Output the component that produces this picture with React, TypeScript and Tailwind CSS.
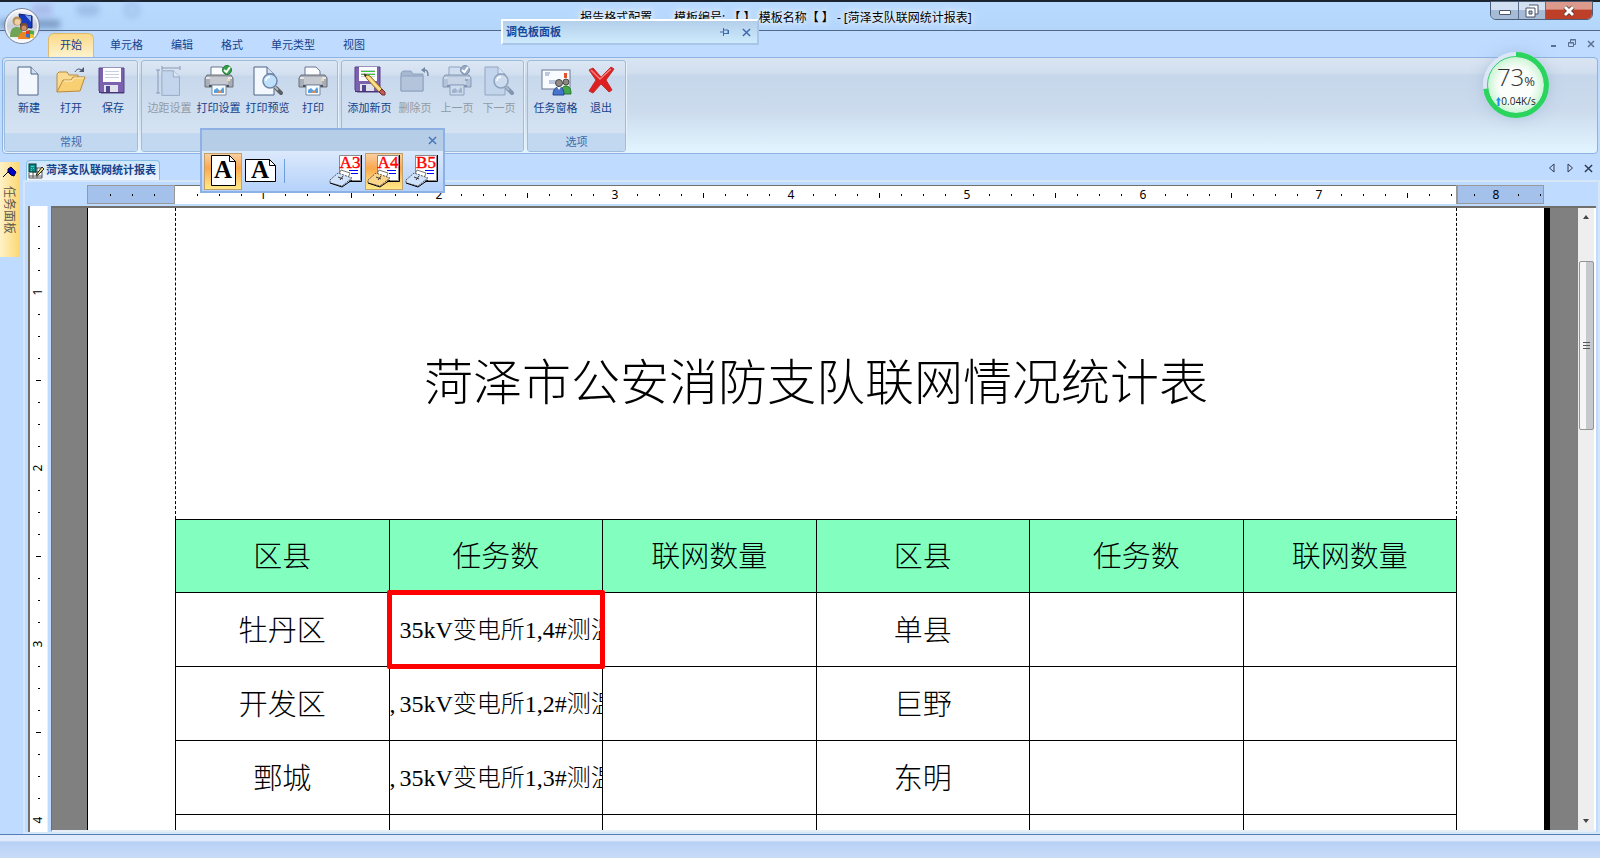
import React from 'react'
import { clsx } from 'clsx'

type IconProps = { muted?: boolean }

const PageShape = ({ x = 5, muted }: { x?: number; muted?: boolean }) => (
  <g transform={`translate(${x} 1)`}>
    <path d="M1 1H14L21 8V29H1Z" fill={muted ? '#c3d5ec' : '#f3f8ff'} stroke={muted ? '#93a5bf' : '#4f6486'} />
    <path d="M14 1V8H21" fill={muted ? '#d9e5f4' : '#cfdef2'} stroke={muted ? '#93a5bf' : '#4f6486'} />
  </g>
)

const NewIcon = () => (
  <svg viewBox="0 0 32 32" className="size-8">
    <g transform="translate(-1 0)">
      <PageShape />
    </g>
  </svg>
)

const OpenIcon = () => (
  <svg viewBox="0 0 32 32" className="size-8">
    <path d="M2 27V9l2-2h8l2 3h9v4" fill="#f9dc92" stroke="#b98a3c" />
    <path d="M2 27L8 15h8l2-3h12L25 26Z" fill="#f8cf72" stroke="#b98a3c" />
    <path d="M9 16h8l2-3h10" stroke="#fff0c0" fill="none" />
    <path d="M20 7c2-4 6-4 8 0" fill="none" stroke="#4a5970" />
    <path d="M24 7h5V2Z" fill="#4a5970" />
  </svg>
)

const FloppyShape = () => (
  <>
    <path d="M2 3H27V28H4L2 26Z" fill="#7c61ae" stroke="#56418a" />
    <rect x="6" y="3" width="18" height="14" fill="#fdfdff" />
    <path d="M8 6.500h14M8 9.500h14M8 12.500h14" stroke="#c9cede" />
    <rect x="7" y="20" width="14" height="8" fill="#dfe1ec" />
    <rect x="9" y="21" width="4" height="7" fill="#54468a" />
    <path d="M2 27.500H27" stroke="#463475" />
  </>
)

const SaveIcon = () => (
  <svg viewBox="0 0 32 32" className="size-8">
    <FloppyShape />
  </svg>
)

const MarginIcon = () => (
  <svg viewBox="0 0 32 32" className="size-8">
    <g transform="translate(7 4) scale(.88)">
      <PageShape x={0} muted />
    </g>
    <path d="M8 3H26M8 1V5M26 1V5M4 5V28M2 5H6M2 28H6" stroke="#8699b5" fill="none" />
  </svg>
)

const PrinterShape = ({ muted }: IconProps) => (
  <>
    <path d="M8 11V2H19L23 6V11Z" fill={muted ? '#d0deef' : '#fafcff'} stroke={muted ? '#8ea2bf' : '#68778f'} />
    <path d="M4 10H28L30 13V22H2V13Z" fill={muted ? '#b3c3d9' : '#a9adb5'} stroke={muted ? '#8597b3' : '#6b7079'} />
    <path d="M3 13H29" stroke={muted ? '#d0dcea' : '#e4e6e9'} strokeWidth="2" />
    <rect x="7" y="12" width="18" height="7" fill={muted ? '#c7d4e5' : '#c6c9cf'} />
    <path d="M6 21H26" stroke={muted ? '#8093b0' : '#4c5058'} strokeWidth="2" />
    <rect x="24" y="14" width="3" height="2" fill={muted ? '#95a8c3' : '#f6d9a0'} />
    <path d="M9 20H23V30H9Z" fill={muted ? '#cddbec' : '#f9fcff'} stroke={muted ? '#8ca0bd' : '#7989a1'} />
    <path d="M11 28V25L14 23L17 26L20 22L21 24V28Z" fill={muted ? '#9fb3cf' : '#579fdd'} />
    <path d="M14 28L17 25L19 28Z" fill={muted ? '#b7c7dc' : '#e58a4d'} />
  </>
)

const PrintIcon = () => (
  <svg viewBox="0 0 32 32" className="size-8">
    <PrinterShape />
  </svg>
)

const PrintCheckIcon = ({ muted }: IconProps) => (
  <svg viewBox="0 0 32 32" className="size-8">
    <PrinterShape muted={muted} />
    <circle cx="24" cy="5" r="4.5" fill={muted ? '#98acc7' : '#36a148'} stroke={muted ? '#7d91b0' : '#23783a'} />
    <path d="M21 5L23.500 7L27 2" stroke="#fff" strokeWidth="2" fill="none" />
  </svg>
)

const PreviewIcon = ({ muted }: IconProps) => (
  <svg viewBox="0 0 32 32" className="size-8">
    <PageShape x={1} muted={muted} />
    <path d="M24 23L29 28" stroke={muted ? '#8395b0' : '#5d5f66'} strokeWidth="4" strokeLinecap="round" />
    <path d="M22 21L26 25" stroke={muted ? '#a9b9cf' : '#b7b9be'} strokeWidth="2" />
    <circle cx="18" cy="16" r="7" fill={muted ? '#ccdcee' : '#bfe0fa'} stroke={muted ? '#8ea1bd' : '#7186a8'} strokeWidth="1.500" />
    <path d="M14 16c0-3 2-4 4-4" stroke="#fff" strokeWidth="1.5" fill="none" />
  </svg>
)

const AddPageIcon = () => (
  <svg viewBox="0 0 32 32" className="size-8">
    <g transform="translate(-1 -1)">
      <FloppyShape />
    </g>
    <path d="M7 6.500h14M7 9.500h14" stroke="#35c435" />
    <path d="M10 9L13 14L25 27L28 24L16 11Z" fill="#f7d272" stroke="#8c6420" />
    <path d="M14 12L26 25" stroke="#fff0b5" />
    <path d="M25 27L28 24L31 27V30H28Z" fill="#c05a5a" stroke="#703030" />
    <path d="M10 9L11 12L13 10Z" fill="#222" />
  </svg>
)

const DeletePageIcon = () => (
  <svg viewBox="0 0 32 32" className="size-8">
    <path d="M2 26V8l2-2h8l2 3h10v17Z" fill="#a7b9d2" stroke="#8ea2be" />
    <path d="M2 11h22v15H2Z" fill="#b4c4da" stroke="#8fa3bf" />
    <path d="M24 5h2c2 0 3 2 3 6" fill="none" stroke="#7488a6" strokeWidth="1.500" />
    <path d="M22 5L26 2V8Z" fill="#7488a6" />
  </svg>
)

const TaskPaneIcon = () => (
  <svg viewBox="0 0 32 32" className="size-8">
    <rect x="2" y="5" width="28" height="19" fill="#f8fbff" stroke="#6a7993" />
    <rect x="24" y="8" width="3" height="5" fill="#e2502c" />
    <path d="M5 8h5M5 10h4M9 16h8M9 18h7" stroke="#8094c2" />
    <circle cx="26" cy="17" r="3" fill="#8b867f" stroke="#4c4a47" />
    <path d="M21 29c0-6 2-8 5-8s5 2 5 8Z" fill="#43a847" stroke="#28762e" />
    <circle cx="19" cy="18" r="3.5" fill="#8f8a83" stroke="#4c4a47" />
    <path d="M13 30c0-6 3-8 6-8s5 2 5 8Z" fill="#4773cc" stroke="#28458e" />
    <path d="M17 22L19 25L21 22Z" fill="#fff" />
  </svg>
)

const ExitIcon = () => (
  <svg viewBox="0 0 32 32" className="size-8">
    <path
      d="M4 5L8 3L16 12L26 2L29 4L21 15L27 25L24 27L16 19L8 28L4 26L11 15Z"
      fill="#dd1f1f"
      stroke="#c23030"
      strokeLinejoin="round"
    />
    <path d="M6 5L15 14L26 4" stroke="#f78080" fill="none" strokeWidth="1.5" />
  </svg>
)

const PortraitIcon = () => (
  <svg viewBox="0 0 32 32" className="size-8">
    <path d="M4.500 .5H22.500L28.500 6.500V30.500H4.500Z" fill="#fff" stroke="#000" />
    <path d="M22.500 .5V6.500H28.500" fill="none" stroke="#000" />
    <text x="16" y="23" textAnchor="middle" className="font-['Liberation_Serif',serif] text-[25px] font-bold">
      A
    </text>
  </svg>
)

const LandscapeIcon = () => (
  <svg viewBox="0 0 32 32" className="size-8">
    <path d="M.5 4.500H24.500L30.500 10.500V26.500H.5Z" fill="#fff" stroke="#000" />
    <path d="M24.500 4.500V10.500H30.500" fill="none" stroke="#000" />
    <text x="15" y="23" textAnchor="middle" className="font-['Liberation_Serif',serif] text-[25px] font-bold">
      A
    </text>
  </svg>
)

const PaperIcon = ({ label, warm }: { label: string; warm?: boolean }) => (
  <svg viewBox="0 0 34 34" className="size-[34px]">
    <path d="M10.500 1.500H31.500V26.500H10.500Z" fill="#fff" stroke="#8a8a8a" />
    <path d="M32.500 1V27.500H20" fill="none" stroke="#000" />
    <text
      x="21"
      y="14"
      textAnchor="middle"
      fill="#f00"
      stroke="#f00"
      strokeWidth=".4"
      className="font-['Liberation_Serif',serif] text-[17px]"
    >
      {label}
    </text>
    <path d="M20 16.500H29M22 19.500H29" stroke="#00f" />
    <path d="M9 22L12 16L21 19L19 24Z" fill="#fff" stroke="#777" />
    <path d="M1 26L9 19L23 24L13 32L1 29Z" fill={warm ? '#fbd68a' : '#cfe3fc'} stroke="#555" strokeDasharray="2 1" />
    <path d="M1 29L13 33L23 26" stroke="#000" fill="none" />
    <path d="M9 23L14 25M11 26L14 22" stroke="#333" />
  </svg>
)

const OrbIcon = () => (
  <svg viewBox="0 0 38 38" className="size-[38px]">
    <defs>
      <linearGradient id="orb" x1="0" y1="0" x2="0" y2="1">
        <stop offset="0" stopColor="#fafbfd" />
        <stop offset=".5" stopColor="#c6cedb" />
        <stop offset="1" stopColor="#fcfdff" />
      </linearGradient>
    </defs>
    <circle cx="19" cy="19" r="17.5" fill="url(#orb)" stroke="#76849c" />
    <circle cx="19" cy="19" r="16" fill="none" stroke="#fff" />
    <path d="M16 7L29 9V21L18 20Z" fill="#1739bd" stroke="#0c1c6a" />
    <path d="M22 8L28 9V15Z" fill="#7fa7f5" />
    <circle cx="14" cy="14" r="4.5" fill="#b8925a" />
    <circle cx="14.500" cy="15" r="3" fill="#f1cfa2" />
    <path d="M7 30c0-8 3-10 7-10s6 3 6 10Z" fill="#6fa355" />
    <circle cx="21" cy="20" r="4" fill="#7c4f33" />
    <circle cx="21" cy="21" r="2.500" fill="#c88f68" />
    <path d="M15 32c0-5 3-7 6-7s6 2 6 7Z" fill="#ec8424" />
    <path d="M23 24L27 23V27H23Z" fill="#e23b2b" />
    <path d="M27 23L31 24V28L27 27Z" fill="#4cae3c" />
    <path d="M23 27H27V31L23 30Z" fill="#2f6fd8" />
    <path d="M27 27L31 28V31L27 31Z" fill="#f5c324" />
  </svg>
)

const CloseGlyph = () => (
  <svg viewBox="0 0 10 10" className="size-[9px]">
    <path d="M1 1L9 9M9 1L1 9" stroke="currentColor" strokeWidth="1.6" />
  </svg>
)

type RibbonItem = { label: string; icon: React.ReactNode; disabled?: boolean }

const ribbonGroups: { title: string; items: RibbonItem[] }[] = [
  {
    title: '常规',
    items: [
      { label: '新建', icon: <NewIcon /> },
      { label: '打开', icon: <OpenIcon /> },
      { label: '保存', icon: <SaveIcon /> },
    ],
  },
  {
    title: '',
    items: [
      { label: '边距设置', icon: <MarginIcon />, disabled: true },
      { label: '打印设置', icon: <PrintCheckIcon /> },
      { label: '打印预览', icon: <PreviewIcon /> },
      { label: '打印', icon: <PrintIcon /> },
    ],
  },
  {
    title: '',
    items: [
      { label: '添加新页', icon: <AddPageIcon /> },
      { label: '删除页', icon: <DeletePageIcon />, disabled: true },
      { label: '上一页', icon: <PrintCheckIcon muted />, disabled: true },
      { label: '下一页', icon: <PreviewIcon muted />, disabled: true },
    ],
  },
  {
    title: '选项',
    items: [
      { label: '任务窗格', icon: <TaskPaneIcon /> },
      { label: '退出', icon: <ExitIcon /> },
    ],
  },
]

const menuTabs = ['单元格', '编辑', '格式', '单元类型', '视图']

const headers = ['区县', '任务数', '联网数量', '区县', '任务数', '联网数量']

const rows = [
  { left: '牡丹区', lead: '', task: '35kV变电所1,4#测温', right: '单县', selected: true },
  { left: '开发区', lead: ',', task: '35kV变电所1,2#测温', right: '巨野' },
  { left: '鄄城', lead: ',', task: '35kV变电所1,3#测温', right: '东明' },
  { left: '', lead: '', task: '', right: '' },
]

const RulerMarks = ({ from, to }: { from: number; to: number }) => (
  <div className="ml-[11px] flex h-full items-center">
    {Array.from({ length: to - from + 1 }, (_, i) => from + i).map((n) => (
      <div key={n} className="flex w-[22px] shrink-0 justify-center text-[12px] leading-4">
        {n % 8 === 4 ? (
          <span>{(n + 4) / 8}</span>
        ) : (
          <span className={clsx('w-px bg-black', n % 8 === 0 ? 'h-[5px]' : 'h-[2px]')} />
        )}
      </div>
    ))}
  </div>
)

const VerticalRuler = () => (
  <div className="w-5 overflow-hidden border-r border-l-2 border-r-[#eee] border-l-[#716f6b] bg-white pt-[9px]">
    {Array.from({ length: 28 }, (_, i) => i + 1).map((n) => (
      <div key={n} className="flex h-[22px] items-center justify-center text-[12px] leading-4">
        {n % 8 === 4 ? (
          <span className="-rotate-90">{(n + 4) / 8}</span>
        ) : (
          <span className={clsx('h-px bg-black', n % 8 === 0 ? 'w-[5px]' : 'w-[2px]')} />
        )}
      </div>
    ))}
  </div>
)

const TitleBar = () => (
  <header className="relative flex h-[31px] items-start justify-center border-t-2 border-b border-t-[#1c2430] border-b-[#4f6787] bg-linear-to-b from-[#b9daff] to-[#b5d6fb]">
    <div className="absolute top-[18px] left-0 h-2 w-[60px] bg-[#4f6f9d]/60 blur-[3px]" />
    <div className="absolute top-0 left-8 flex items-center gap-6 opacity-30 blur-[3px]">
      <span className="h-3 w-5 bg-[#8f7ec0]" />
      <span className="h-3 w-6 rounded-full bg-[#5f84b8]" />
      <span className="size-4 rounded-full border-4 border-[#5f84b8]" />
    </div>
    <h1 className="ml-[-48px] pt-2 text-[12px] leading-4 whitespace-pre text-black [text-shadow:0_0_8px_#fff,0_0_5px_#fff]">
      {'报告格式配置       模板编号: 【 】 模板名称【 】 - [菏泽支队联网统计报表]'}
    </h1>
    <div className="absolute top-[-1px] right-[7px] flex h-[19px] overflow-hidden rounded-b-md border border-[#4b5d77]">
      <button
        aria-label="最小化"
        className="flex w-7 items-center justify-center border-r border-[#5b6d88] bg-linear-to-b from-[#d2e0f1] from-45% to-[#a6bbd6] to-50%"
      >
        <span className="mt-1 h-[5px] w-3 rounded-[1px] border border-[#4a5568] bg-white" />
      </button>
      <button
        aria-label="还原"
        className="flex w-[27px] items-center justify-center border-r border-[#5b6d88] bg-linear-to-b from-[#d2e0f1] from-45% to-[#a6bbd6] to-50%"
      >
        <svg viewBox="0 0 14 14" className="size-[14px]">
          <path d="M4 1H13V10H10" fill="#fff" stroke="#4a5568" />
          <path d="M1 4H10V13H1Z" fill="#fff" stroke="#4a5568" />
          <path d="M4 7H7V10H4Z" fill="#a9bcd4" stroke="#4a5568" />
        </svg>
      </button>
      <button
        aria-label="关闭"
        className="flex w-[46px] items-center justify-center bg-linear-to-b from-[#dc9a8c] from-40% to-[#bd3f28] to-50%"
      >
        <svg viewBox="0 0 14 12" className="h-3 w-[14px]">
          <path d="M3 2L11 10M11 2L3 10" stroke="#4c3030" strokeWidth="4.500" />
          <path d="M3 2L11 10M11 2L3 10" stroke="#fff" strokeWidth="3" />
        </svg>
      </button>
    </div>
  </header>
)

const MenuBar = () => (
  <nav className="flex h-[26px] items-end pl-12 text-[11px] text-[#15428b]">
    <button className="h-6 w-[46px] rounded-t-md border border-b-0 border-[#dfb96c] bg-linear-to-b from-[#fbd988] to-[#fdf3cd]">
      开始
    </button>
    <div className="ml-[2px] flex">
      {menuTabs.map((tab) => (
        <button key={tab} className="h-6 px-[14px]">
          {tab}
        </button>
      ))}
    </div>
    <div className="mr-[3px] ml-auto flex h-full items-center gap-[7px] text-[#5c7190]">
      <button aria-label="最小化窗口" className="size-3">
        <span className="mt-1 ml-1 block h-[2px] w-[5px] bg-current" />
      </button>
      <button aria-label="还原窗口" className="size-3">
        <svg viewBox="0 0 12 12" className="size-3">
          <path d="M4.500 4V1.500H9.500V6.500H8M2.500 4.500H7.500V8.500H2.500ZM2 5H8M4 2H10" fill="none" stroke="currentColor" />
        </svg>
      </button>
      <button aria-label="关闭窗口" className="flex size-3 items-center justify-center">
        <svg viewBox="0 0 8 8" className="size-2">
          <path d="M1 1L7 7M7 1L1 7" stroke="currentColor" strokeWidth="1.500" />
        </svg>
      </button>
    </div>
  </nav>
)

const Ribbon = () => (
  <div className="mx-[2px] flex h-[97px] gap-[3px] rounded-[4px] border border-[#8db2e3] bg-[linear-gradient(to_bottom,#dae5f3,#d1deee_16%,#c7d7eb_18%,#cbdbed_55%,#e2f5ff)] p-[2px] pl-[1px]">
    {ribbonGroups.map((group, i) => (
      <section
        key={i}
        className="flex h-[92px] flex-col overflow-hidden rounded-[3px] border border-[#9dbddd] bg-[linear-gradient(to_bottom,#dce7f4,#d2dfef_15%,#c8d8ec_17%,#d8e6f4)] shadow-[1px_1px_0_#e8f2fc]"
      >
        <div className="flex flex-1 px-[3px] pt-1">
          {group.items.map((item) => (
            <button
              key={item.label}
              disabled={item.disabled}
              className={clsx(
                'flex flex-col items-center text-[11px] whitespace-nowrap',
                item.label.length > 3 ? 'w-[49px]' : 'w-[42px]',
                item.disabled ? 'text-[#929aa5]' : 'text-[#15428b]'
              )}
            >
              {item.icon}
              <span className="mt-[3px] leading-4">{item.label}</span>
            </button>
          ))}
        </div>
        <h2 className="h-[18px] bg-[#c1d8f0] text-center text-[11px] leading-[18px] text-[#3e6aaa]">{group.title}</h2>
      </section>
    ))}
  </div>
)

const PalettePanel = () => (
  <div className="absolute top-[19px] left-[501px] flex h-[26px] w-[258px] items-center border-2 border-t-white border-r-[#a9c6e8] border-b-[#a9c6e8] border-l-white bg-linear-to-b from-[#b4cfea] to-[#cdeafd] pr-[6px] pl-[3px] text-[#3b69ad]">
    <h2 className="flex-1 text-[11px] font-bold text-[#15499b]">调色板面板</h2>
    <button aria-label="固定" className="mr-3">
      <svg viewBox="0 0 10 8" className="h-2 w-[10px]">
        <path d="M0 4H3M3.500 0V8M4 2H8V6M4 5.500H9M8.500 2V6" fill="none" stroke="currentColor" />
      </svg>
    </button>
    <button aria-label="关闭面板">
      <CloseGlyph />
    </button>
  </div>
)

const pressed = 'border border-[#c2a06b] bg-linear-to-b from-[#f9cfa0] via-[#fba84c] via-40% to-[#ffe988]'

const PaperToolbar = () => (
  <div className="absolute top-[128px] left-[200px] w-[245px] border-2 border-[#8db1e5] bg-[#dbe9fb]">
    <div className="flex h-[21px] items-center justify-end bg-[#b6cde8] pr-[6px] text-[#4675b5]">
      <button aria-label="关闭工具栏">
        <CloseGlyph />
      </button>
    </div>
    <div className="flex h-10 items-center bg-linear-to-b from-[#dce9fb] to-[#b5d2fa] px-[2px]">
      <button aria-label="纵向" className={clsx('flex h-[37px] w-[38px] items-center justify-center', pressed)}>
        <PortraitIcon />
      </button>
      <button aria-label="横向" className="flex h-[37px] w-[38px] items-center justify-center">
        <LandscapeIcon />
      </button>
      <span className="ml-1 h-6 w-px bg-[#6d9fdd]" />
      <div className="ml-auto flex">
        {['A3', 'A4', 'B5'].map((size) => (
          <button
            key={size}
            aria-label={size}
            className={clsx('flex h-[37px] w-[38px] items-center justify-center', size === 'A4' && pressed)}
          >
            <PaperIcon label={size} warm={size === 'A4'} />
          </button>
        ))}
      </div>
    </div>
  </div>
)

const SpeedMeter = () => (
  <div className="absolute top-[52px] right-[51px] flex size-[66px] flex-col items-center rounded-full shadow-[0_0_14px_#8fa9cc80]">
    <svg viewBox="0 0 66 66" className="absolute inset-0 size-full -rotate-90">
      <defs>
        <radialGradient id="meter">
          <stop offset=".55" stopColor="#fbfefb" />
          <stop offset="1" stopColor="#c2f2cd" />
        </radialGradient>
      </defs>
      <circle cx="33" cy="33" r="30.500" fill="url(#meter)" stroke="#dbe6f6" strokeWidth="5" />
      <circle cx="33" cy="33" r="28.500" fill="none" stroke="#2fd565" strokeWidth="1" />
      <circle
        cx="33"
        cy="33"
        r="30.500"
        fill="none"
        stroke="#2ad45f"
        strokeWidth="5"
        pathLength="100"
        strokeDasharray="73 27"
      />
    </svg>
    <p className="relative mt-[11px] font-['Open_Sans',sans-serif] text-[24px] leading-7 font-light text-[#333]">
      73<span className="text-[13px] font-normal">%</span>
    </p>
    <p className="relative flex items-center font-['Open_Sans',sans-serif] text-[10px] leading-3 text-[#222]">
      <svg viewBox="0 0 5 9" className="h-[9px] w-[5px]">
        <path d="M2.500 0L5 3.500H3.500V9H1.500V3.500H0Z" fill="#1d8ef0" />
      </svg>
      0.04K/s
    </p>
  </div>
)

const DocumentTabs = () => (
  <div className="flex h-[26px] items-end pl-[3px]">
    <button className="flex h-5 items-center gap-[2px] rounded-t-[4px] border border-b-0 border-[#86bfe6] bg-linear-to-b from-[#cde6fb] to-[#eef5fd] pr-[3px] pl-[1px] text-[11px] font-bold whitespace-nowrap text-[#15428b]">
      <svg viewBox="0 0 16 16" className="size-4">
        <path d="M5 5H14V15H1V10M1 13H14M5 15V9M9 15V5M5 9H14" fill="#fff" stroke="#555" />
        <rect x="1" y="1" width="7" height="8" fill="#0c8a86" stroke="#033" />
        <path d="M3 3.500H6M3 5.500H4M5 5.500H6M3 7.500H4" stroke="#5cc" />
        <path d="M8 12L14 4L16 6L10 12Z" fill="#e8e27a" stroke="#222" />
      </svg>
      菏泽支队联网统计报表
    </button>
    <div className="mr-[7px] ml-auto flex h-6 items-center gap-[10px] text-[#2e3b52]">
      <button aria-label="上一个">
        <svg viewBox="0 0 8 10" className="h-[10px] w-2">
          <path d="M6 1V9L1.500 5Z" fill="none" stroke="currentColor" />
        </svg>
      </button>
      <button aria-label="下一个">
        <svg viewBox="0 0 8 10" className="h-[10px] w-2">
          <path d="M2 1V9L6.500 5Z" fill="none" stroke="currentColor" />
        </svg>
      </button>
      <button aria-label="关闭文档">
        <CloseGlyph />
      </button>
    </div>
  </div>
)

const ReportPage = () => (
  <div className="flex-1 overflow-hidden border-l border-black bg-white px-[87px]">
    <div className="flex h-[311px] items-center justify-center border-x border-dashed border-black pt-9">
      <h2 className="text-[49px] leading-none font-light whitespace-nowrap">菏泽市公安消防支队联网情况统计表</h2>
    </div>
    <table className="w-full table-fixed border-collapse text-[29px] font-light">
      <thead>
        <tr className="h-[73px] bg-[#82ffbf]">
          {headers.map((header, i) => (
            <th key={i} className="border border-black p-0 font-light">
              {header}
            </th>
          ))}
        </tr>
      </thead>
      <tbody>
        {rows.map((row, i) => (
          <tr key={i} className="h-[74px] text-center">
            <td className="border border-black p-0">{row.left}</td>
            <td className="relative border border-black p-0 text-left">
              <div className="flex overflow-hidden font-['Liberation_Serif','Noto_Sans_CJK_SC',serif] text-[24px] leading-10 whitespace-nowrap">
                <span className="w-[10px] shrink-0">{row.lead}</span>
                {row.task}
              </div>
              {row.selected && <div className="absolute -inset-[3px] rounded-[2px] border-[5px] border-[#f00]" />}
            </td>
            <td className="border border-black p-0" />
            <td className="border border-black p-0">{row.right}</td>
            <td className="border border-black p-0" />
            <td className="border border-black p-0" />
          </tr>
        ))}
      </tbody>
    </table>
  </div>
)

const Scrollbar = () => (
  <div className="flex w-[18px] flex-col items-center border-r-2 border-white bg-[#eeeeef]">
    <button aria-label="向上滚动" className="flex h-[18px] items-center">
      <span className="border-x-[3px] border-b-4 border-transparent border-b-[#444]" />
    </button>
    <div className="mt-[35px] flex h-[169px] w-[15px] flex-col items-center justify-center gap-[2px] rounded-[2px] border border-[#949494] bg-linear-to-r from-[#f5f5f5] from-45% to-[#c8c9ce] to-50%">
      <span className="h-px w-[7px] bg-[#555]" />
      <span className="h-px w-[7px] bg-[#555]" />
      <span className="h-px w-[7px] bg-[#555]" />
    </div>
    <button aria-label="向下滚动" className="mt-auto flex h-[18px] items-center">
      <span className="border-x-[3px] border-t-4 border-transparent border-t-[#444]" />
    </button>
  </div>
)

const App = () => {
  return (
    <div className="relative flex h-screen flex-col overflow-hidden bg-[#bfdbff] font-['Noto_Sans','Noto_Sans_CJK_SC',sans-serif]">
      <TitleBar />
      <MenuBar />
      <Ribbon />
      <main className="flex min-h-0 flex-1">
        <aside className="w-[23px] shrink-0 pt-2">
          <button className="flex h-[95px] w-[19px] flex-col items-center bg-linear-to-r from-[#fef2c6] to-[#fdd874] pt-1 text-[12px] text-[#5f5a4c]">
            <svg viewBox="0 0 16 12" className="h-3 w-4">
              <path d="M1 11L7 5" stroke="#000" />
              <path d="M6 3L9 1L14 6L12 10L9 9L6 6Z" fill="#00c" stroke="#003" />
            </svg>
            <span className="mt-2 mr-[2px] leading-4 [text-orientation:sideways] [writing-mode:vertical-rl]">任务面板</span>
          </button>
        </aside>
        <div className="flex min-w-0 flex-1 flex-col">
          <DocumentTabs />
          <div className="flex min-h-0 flex-1 flex-col border-2 border-[#d5e6f8] pt-[3px]">
            {/* Horizontal ruler */}
            <div className="mr-[54px] ml-[62px] flex h-[19px] shrink-0">
              <div className="w-[88px] overflow-hidden border border-[#999] bg-[#a3c1ea]">
                <RulerMarks from={-3} to={-1} />
              </div>
              <div className="min-w-0 flex-1 overflow-hidden border-t border-[#716f6b] bg-white">
                <RulerMarks from={1} to={58} />
              </div>
              <div className="w-[88px] overflow-hidden border border-l-2 border-[#999] bg-[#a3c1ea]">
                <div className="ml-[-6px] h-full">
                  <RulerMarks from={59} to={62} />
                </div>
              </div>
            </div>
            <div className="mt-[2px] flex min-h-0 flex-1 pr-[2px] pl-[3px]">
              <VerticalRuler />
              <div className="ml-[3px] flex min-w-0 flex-1 border-t-2 border-b-2 border-l border-t-[#716f6b] border-b-[#e8eef5] border-l-[#716f6b] bg-[#808080]">
                <div className="w-[35px]" />
                <ReportPage />
                <div className="mr-7 w-[6px] bg-black" />
                <Scrollbar />
              </div>
            </div>
          </div>
        </div>
      </main>
      <footer className="h-6 border-t border-[#567db1] bg-linear-to-b from-[#dfeafc] from-25% via-[#b7d1f5] via-30% to-[#c9dcf8]" />
      {/* Floating parts */}
      <button aria-label="应用程序菜单" className="absolute top-[7px] left-[3px]">
        <OrbIcon />
      </button>
      <PalettePanel />
      <PaperToolbar />
      <SpeedMeter />
    </div>
  )
}

export default App
